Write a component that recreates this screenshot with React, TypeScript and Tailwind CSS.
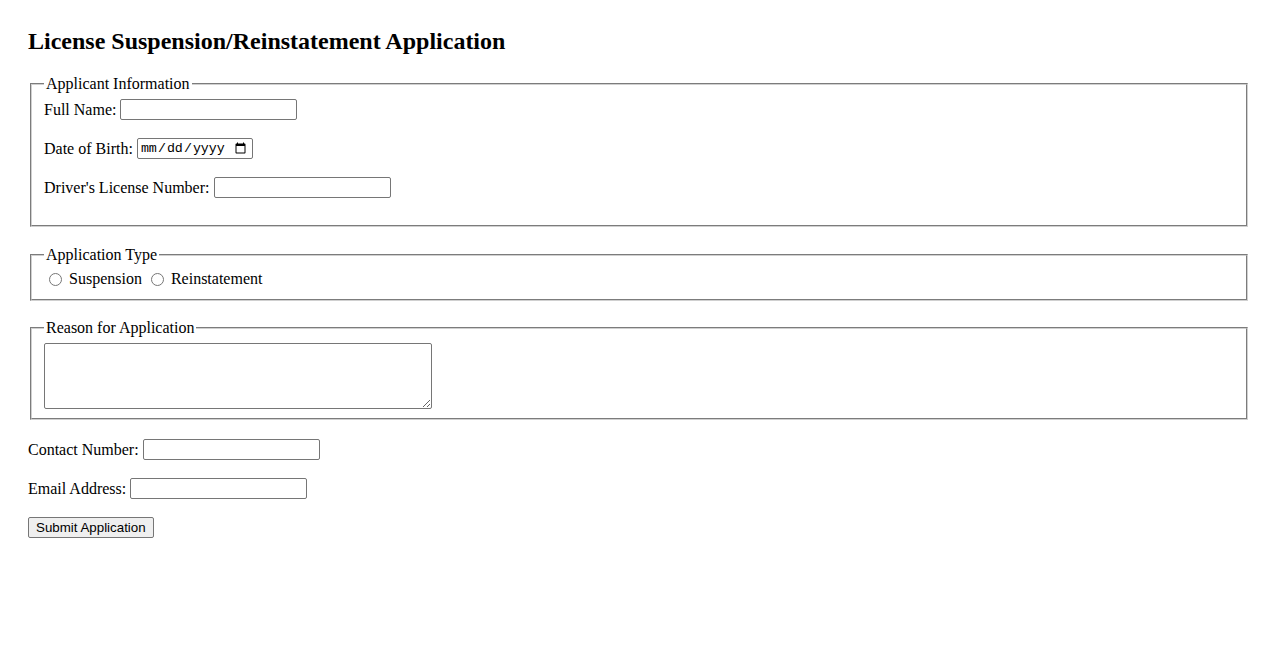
import React from "react";

const inputCls =
  "w-[177px] h-[21px] border border-[#767676] rounded-[2px] bg-white px-[2px] text-[13.33px] font-['Liberation_Sans',Arial,sans-serif] outline-none";

export default function App() {
  return (
    <div className="min-h-[650px] bg-white px-7 pt-[27px] text-base text-black font-['Liberation_Serif','Times_New_Roman',serif] leading-[18px]">
      <h2 className="text-2xl font-bold leading-[28px] mb-5">
        License Suspension/Reinstatement Application
      </h2>

      <fieldset className="mx-[2px] mb-[19px] border-2 [border-style:groove] border-[#d0d0d0] px-3 pt-[6px] pb-[9px]">
        <legend className="px-[2px] leading-[18px]">Applicant Information</legend>
        <div className="flex items-center h-[21px] mb-[18px]">
          <span>Full Name:</span>
          <input type="text" className={inputCls + " ml-[4px]"} />
        </div>
        <div className="flex items-center h-[21px] mb-[18px]">
          <span>Date of Birth:</span>
          <input
            type="date"
            className="ml-[4px] w-[116px] h-[21px] border border-[#767676] rounded-[2px] bg-white pl-[2px] pr-[3px] text-[13.33px] font-['Liberation_Mono',monospace] outline-none"
          />
        </div>
        <div className="flex items-center h-[21px] mb-[18px]">
          <span>Driver's License Number:</span>
          <input type="text" className={inputCls + " ml-[4px]"} />
        </div>
      </fieldset>

      <fieldset className="mx-[2px] mb-[18px] border-2 [border-style:groove] border-[#d0d0d0] px-3 pt-[5px] pb-[10px]">
        <legend className="px-[2px] leading-[18px]">Application Type</legend>
        <div className="flex items-center h-[20px]">
          <input type="radio" name="type" className="ml-[5px] mr-[3px] w-[13px] h-[13px]" />
          <span className="ml-[4px]">Suspension</span>
          <input type="radio" name="type" className="ml-[9px] mr-[3px] w-[13px] h-[13px]" />
          <span className="ml-[4px]">Reinstatement</span>
        </div>
      </fieldset>

      <fieldset className="mx-[2px] mb-[19px] border-2 [border-style:groove] border-[#d0d0d0] px-3 pt-[6px] pb-[9px]">
        <legend className="px-[2px] leading-[18px]">Reason for Application</legend>
        <textarea className="block w-[388px] h-[66px] border border-[#767676] rounded-[2px] bg-white p-[2px] text-[13.33px] font-['Liberation_Mono',monospace] outline-none" />
      </fieldset>

      <div className="flex items-center h-[21px] mb-[18px]">
        <span>Contact Number:</span>
        <input type="tel" className={inputCls + " ml-[4px]"} />
      </div>
      <div className="flex items-center h-[21px] mb-[18px]">
        <span>Email Address:</span>
        <input type="email" className={inputCls + " ml-[4px]"} />
      </div>
      <button
        type="submit"
        className="h-[21px] px-[7px] border border-[#767676] rounded-[2px] bg-[#efefef] text-[13.33px] leading-[15px] font-['Liberation_Sans',Arial,sans-serif]"
      >
        Submit Application
      </button>
    </div>
  );
}
